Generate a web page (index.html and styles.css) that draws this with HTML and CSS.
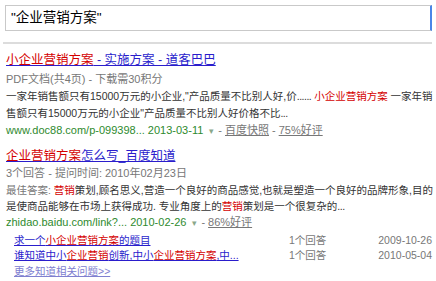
FILE: index.html
```html
<!DOCTYPE html>
<html>
<head>
<meta charset="utf-8">
<link rel="stylesheet" href="styles.css">
</head>
<body>
<div class="page">
  <div class="search"><div class="box">"企业营销方案"</div></div>
  <div class="sep"></div>

  <div class="result">
    <div class="title"><a href="#"><em>小企业营销方案</em> - 实施方案 - 道客巴巴</a></div>
    <div class="meta">PDF文档(共4页) - 下载需30积分</div>
    <div class="abs">一家年销售额只有15000万元的小企业,"产品质量不比别人好,价<span class="dots">......</span> <em>小企业营销方案</em> 一家年销<br>售额只有15000万元的小企业"产品质量不比别人好价格不比<span class="dots">...</span></div>
    <div class="url">www.doc88.com/p-099398... 2013-03-11<span class="arrow">▾</span><span class="dash">-</span><a class="gray" href="#">百度快照</a><span class="dash">-</span><a class="gray" href="#">75%好评</a></div>
  </div>

  <div class="result second">
    <div class="title"><a href="#"><em>企业营销方案</em>怎么写_百度知道</a></div>
    <div class="meta">3个回答 - 提问时间: 2010年02月23日</div>
    <div class="abs"><span class="label">最佳答案: </span><em class="bold">营销</em>策划,顾名思义,营造一个良好的商品感觉,也就是塑造一个良好的品牌形象,目的<br>是使商品能够在市场上获得成功. 专业角度上的<em class="bold">营销</em>策划是一个很复杂的<span class="dots">...</span></div>
    <div class="url">zhidao.baidu.com/link?... 2010-02-26<span class="arrow">▾</span><span class="dash">-</span><a class="gray" href="#">86%好评</a></div>
    <div class="list">
      <div class="row">
        <a class="q" href="#">求一个<em>小企业营销方案</em>的题目</a>
        <span class="cnt">1个回答</span>
        <span class="date">2009-10-26</span>
      </div>
      <div class="row">
        <a class="q" href="#">谁知道中小<em>企业营销</em>创新,中小<em>企业营销方案</em>,中...</a>
        <span class="cnt">1个回答</span>
        <span class="date">2010-05-04</span>
      </div>
      <a class="more" href="#">更多知道相关问题&gt;&gt;</a>
    </div>
  </div>
</div>
</body>
</html>
```

FILE: styles.css
```css
html, body {
  margin: 0;
  padding: 0;
  background: #fff;
}
body {
  font-family: "Liberation Sans", Arial, "Noto Sans CJK SC", sans-serif;
  color: #333;
  width: 436px;
  height: 281px;
  overflow: hidden;
}
.page {
  padding: 5px 4px 0 5px;
}
.search {
  display: flex;
}
.box {
  flex: 1;
  height: 24px;
  border: 1px solid #c9c9c9;
  border-right: 2px solid #4a86e8;
  font-size: 13.5px;
  line-height: 24px;
  padding-left: 5px;
  color: #000;
}
.sep {
  margin: 11px 0 0 -2px;
  height: 2px;
  background: #dcdcdc;
}
.result {
  padding-top: 7px;
  padding-left: 1px;
}
.result.second {
  padding-top: 8px;
}
.title {
  font-size: 12.5px;
  line-height: 18px;
}
.title a {
  color: #2a1dcc;
  text-decoration: underline;
}
em {
  font-style: normal;
  color: #d40000;
}
.meta {
  font-size: 11px;
  line-height: 17px;
  color: #777;
  margin-top: 2px;
}
.second .meta {
  margin-top: 0;
}
.abs {
  font-size: 10.5px;
  line-height: 17px;
  color: #333;
  white-space: nowrap;
}
.second .abs {
  line-height: 16px;
}
.dots {
  letter-spacing: -0.5px;
}
.label {
  color: #777;
}
.url {
  font-size: 11px;
  line-height: 16px;
  color: #2e8a2e;
  white-space: nowrap;
}
.arrow {
  color: #8aa88a;
  font-size: 9px;
  padding: 0 4px 0 6px;
}
.dash {
  color: #777;
  padding-right: 3px;
}
a.gray {
  color: #777;
  text-decoration: underline;
  margin-right: 3px;
}
.list {
  padding-left: 8px;
  font-size: 10.5px;
  line-height: 15px;
  margin-top: 2px;
}
.row {
  display: grid;
  grid-template-columns: 275px 1fr auto;
  white-space: nowrap;
}
.row .q {
  color: #2a1dcc;
  text-decoration: underline;
  overflow: hidden;
}
.cnt {
  color: #777;
}
.date {
  color: #777;
  text-align: right;
}
.more {
  display: inline-block;
  margin-top: 1px;
  color: #8080d0;
  text-decoration: underline;
}
```
